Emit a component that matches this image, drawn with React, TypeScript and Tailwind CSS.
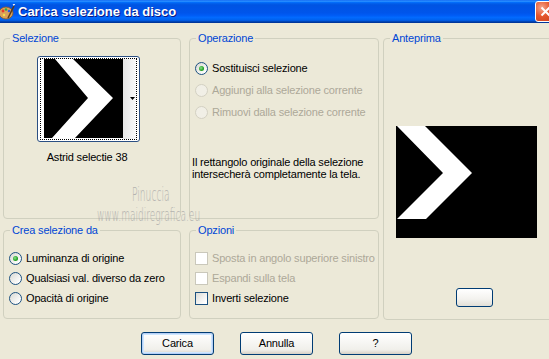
import React from "react";

function Radio({ checked, disabled }: { checked?: boolean; disabled?: boolean }) {
  return (
    <div
      className={
        "w-[13px] h-[13px] rounded-full border flex items-center justify-center shrink-0 " +
        (disabled
          ? "border-[#d3d0c2] bg-[#f1efe6]"
          : "border-[#1c5180] bg-[linear-gradient(135deg,#d8d8d2,#ffffff_85%)]")
      }
    >
      {checked && (
        <div className="w-[5px] h-[5px] rounded-full bg-[radial-gradient(circle_at_40%_40%,#8fe08f,#21a121_60%,#1c8c1c)]" />
      )}
    </div>
  );
}

function Check({ disabled }: { disabled?: boolean }) {
  return (
    <div
      className={
        "w-[13px] h-[13px] border shrink-0 " +
        (disabled
          ? "border-[#cac8bb] bg-white"
          : "border-[#1c5180] bg-[linear-gradient(135deg,#dcdcd7,#ffffff_85%)]")
      }
    />
  );
}

function Row({
  children,
  label,
  disabled,
}: {
  children: React.ReactNode;
  label: string;
  disabled?: boolean;
}) {
  return (
    <div className="flex items-center h-[13px] gap-[4px]">
      {children}
      <span className={"leading-[13px] whitespace-nowrap " + (disabled ? "text-[#aca899]" : "text-black")}>
        {label}
      </span>
    </div>
  );
}

function Legend({ children }: { children: React.ReactNode }) {
  return <legend className="ml-[6px] px-[2px] leading-[13px] text-[#0046d5]">{children}</legend>;
}

const box = "border border-[#d0d0bf] rounded-[4px] min-w-0";

export default function App() {
  return (
    <div className="relative w-[549px] h-[359px] overflow-hidden bg-[#ece9d8] font-['Liberation_Sans',Arial,sans-serif] text-[11px] tracking-[-0.17px] text-black">
      {/* Title bar */}
      <div className="h-[23px] flex items-center bg-[linear-gradient(180deg,#0058ee_0%,#3593ff_4%,#288eff_6%,#127dff_8%,#036ffc_10%,#0262ee_14%,#0057e5_20%,#0054e3_24%,#0055eb_56%,#005bf5_66%,#026afe_76%,#0062ef_86%,#0052d6_92%,#0040ab_94%,#003092_100%)]">
        <svg width="16" height="16" viewBox="0 0 16 16" className="shrink-0 ml-[-1px]">
          <ellipse cx="7" cy="9" rx="7" ry="6" fill="#d9a15a" stroke="#8a5a22" strokeWidth="0.8" />
          <circle cx="4" cy="7" r="1.4" fill="#e83a2a" />
          <circle cx="7" cy="5.5" r="1.3" fill="#2aa84a" />
          <circle cx="10" cy="7" r="1.3" fill="#2a5ae8" />
          <circle cx="5" cy="11" r="1.2" fill="#f3e04a" />
          <path d="M9 14 L15 2" stroke="#5a3a1a" strokeWidth="1.6" />
          <path d="M14 1 L16 0" stroke="#eee" strokeWidth="1.5" />
        </svg>
        <span className="ml-[3px] text-white font-bold text-[13px] tracking-normal leading-[16px] whitespace-nowrap [text-shadow:1px_1px_#0a1883]">
          Carica selezione da disco
        </span>
        <div className="ml-auto mr-[-7px] w-[21px] h-[21px] shrink-0 rounded-[3px] border border-white bg-[radial-gradient(circle_at_30%_30%,#f5a48c,#e5572e_45%,#c8401c)] flex items-center justify-center">
          <svg width="11" height="11" viewBox="0 0 11 11">
            <path d="M1.5 1.5 L9.5 9.5 M9.5 1.5 L1.5 9.5" stroke="white" strokeWidth="2" />
          </svg>
        </div>
      </div>

      {/* Main area */}
      <div className="flex pt-[9px] pl-[3px]">
        {/* Left column */}
        <div className="w-[178px] flex flex-col gap-[5px] shrink-0">
          <fieldset className={box + " h-[187px]"}>
            <Legend>Selezione</Legend>
            <div className="ml-[33px] mt-[11px] w-[103px] flex flex-col items-center">
              <div className="w-[103px] h-[86px] border border-[#2b4f82] rounded-[3px] bg-white px-[2px] py-[1px]">
                <div className="w-full h-full border border-dotted border-black flex">
                  <div className="ml-[3px] bg-white">
                    <svg width="79" height="79" viewBox="0 0 79 79" className="block">
                      <rect width="79" height="79" fill="#000" />
                      <polygon points="11,0 29,0 69,39 31,79 8,79 44,39" fill="#fff" />
                    </svg>
                  </div>
                  <div className="flex-1 bg-[linear-gradient(90deg,#e6e6e6,#fafafa)] flex items-center justify-end pr-[1px]">
                    <svg width="5" height="3" viewBox="0 0 5 3" className="mt-[-2px]">
                      <polygon points="0,0 5,0 2.5,3" fill="#000" />
                    </svg>
                  </div>
                </div>
              </div>
              <div className="mt-[9px] leading-[13px] whitespace-nowrap mr-[3px]">Astrid selectie 38</div>
            </div>
          </fieldset>
          <fieldset className={box + " h-[95px]"}>
            <Legend>Crea selezione da</Legend>
            <div className="mt-[15px] ml-[5px] flex flex-col gap-[7px]">
              <Row label="Luminanza di origine">
                <Radio checked />
              </Row>
              <Row label="Qualsiasi val. diverso da zero">
                <Radio />
              </Row>
              <Row label="Opacità di origine">
                <Radio />
              </Row>
            </div>
          </fieldset>
        </div>

        {/* Middle column */}
        <div className="ml-[8px] w-[190px] flex flex-col gap-[5px] shrink-0">
          <fieldset className={box + " h-[187px]"}>
            <Legend>Operazione</Legend>
            <div className="mt-[17px] ml-[5px] flex flex-col gap-[9px]">
              <Row label="Sostituisci selezione">
                <Radio checked />
              </Row>
              <Row label="Aggiungi alla selezione corrente" disabled>
                <Radio disabled />
              </Row>
              <Row label="Rimuovi dalla selezione corrente" disabled>
                <Radio disabled />
              </Row>
            </div>
            <div className="mt-[37px] ml-[2px] leading-[12px]">
              Il rettangolo originale della selezione
              <br />
              intersecherà completamente la tela.
            </div>
          </fieldset>
          <fieldset className={box + " h-[95px]"}>
            <Legend>Opzioni</Legend>
            <div className="mt-[15px] ml-[5px] flex flex-col gap-[7px]">
              <Row label="Sposta in angolo superiore sinistro" disabled>
                <Check disabled />
              </Row>
              <Row label="Espandi sulla tela" disabled>
                <Check disabled />
              </Row>
              <Row label="Inverti selezione">
                <Check />
              </Row>
            </div>
          </fieldset>
        </div>

        {/* Right column */}
        <div className="ml-[4px] w-[170px] shrink-0">
          <fieldset className={box + " h-[288px]"}>
            <Legend>Anteprima</Legend>
            <div className="mt-[81px] ml-[12px]">
              <svg width="141" height="112" viewBox="0 0 141 112" className="block">
                <rect width="141" height="112" fill="#000" />
                <polygon points="1,0 29,0 76,47 30,93 1,93 47,47" fill="#fff" />
              </svg>
            </div>
            <div className="mt-[50px] ml-[72px] w-[37px] h-[19px] rounded-[3px] border border-[#003c74] bg-[linear-gradient(180deg,#ffffff,#f3f2ee_60%,#e2dfd6)]" />
          </fieldset>
        </div>
      </div>

      {/* Buttons */}
      <div className="mt-[12px] pl-[4px] flex justify-center gap-[26px]">
        <button className="w-[73px] h-[23px] rounded-[3px] border border-[#003c74] bg-[linear-gradient(180deg,#ffffff,#f0efea_80%,#d6d0c5)] shadow-[inset_0_0_0_1px_#b6cff5,inset_0_0_0_2px_#cee7ff] text-[11px] leading-[13px]">
          Carica
        </button>
        <button className="w-[73px] h-[23px] rounded-[3px] border border-[#003c74] bg-[linear-gradient(180deg,#ffffff,#f0efea_80%,#d6d0c5)] text-[11px] leading-[13px]">
          Annulla
        </button>
        <button className="w-[73px] h-[23px] rounded-[3px] border border-[#003c74] bg-[linear-gradient(180deg,#ffffff,#f0efea_80%,#d6d0c5)] text-[11px] leading-[13px]">
          ?
        </button>
      </div>

      {/* Watermark */}
      <div className="absolute left-[132px] top-[187px] pointer-events-none text-[#a5a5a5] text-[19px] leading-[15px] tracking-normal font-['DejaVu_Sans',sans-serif] font-light origin-left scale-x-[0.48] whitespace-nowrap opacity-80">
        Pinuccia
      </div>
      <div className="absolute left-[97px] top-[208px] pointer-events-none text-[#a5a5a5] text-[17px] leading-[14px] tracking-normal font-['DejaVu_Sans',sans-serif] font-light origin-left scale-x-[0.53] whitespace-nowrap opacity-80">
        www.maidiregrafica.eu
      </div>
    </div>
  );
}
